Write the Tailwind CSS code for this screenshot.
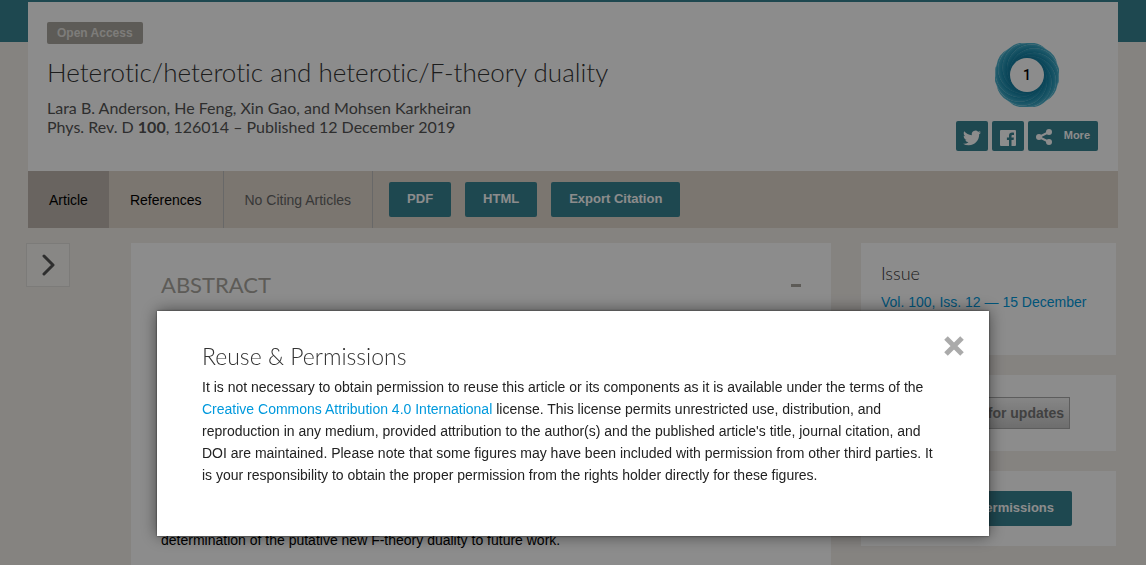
<!DOCTYPE html>
<html lang="en">
<head>
    <meta charset="UTF-8">
    <meta name="viewport" content="width=device-width, initial-scale=1.0">
    <title>Heterotic/heterotic and heterotic/F-theory duality</title>
    <script src="https://cdn.jsdelivr.net/npm/@tailwindcss/browser@4"></script>
</head>
<body class="bg-[#f2eeea] font-['Liberation_Sans',Arial,sans-serif] text-sm text-black overflow-hidden [font-variant-ligatures:none]">
    <div class="h-[42px] bg-[#388393]"></div>

    <div class="relative mx-7 -mt-10">
        <header class="bg-white flex justify-between h-[169px] pl-[19px] pr-5">
            <div class="pt-5">
                <span class="inline-block bg-[#a9a69e] text-[#e4e2de] font-bold text-xs leading-[22px] px-[10px] rounded-xs">Open Access</span>
                <h1 class="font-['Lato',sans-serif] font-light text-[26px] leading-8 mt-3 text-[#333]">Heterotic/heterotic and heterotic/F-theory duality</h1>
                <p class="font-['Lato',sans-serif] text-base leading-[19px] mt-[10px] text-[#555]">Lara B. Anderson, He Feng, Xin Gao, and Mohsen Karkheiran<br>Phys. Rev. D <b class="font-bold">100</b>, 126014 – Published 12 December 2019</p>
            </div>
            <div class="flex flex-col items-center pt-[41px]">
                <svg class="size-16" viewBox="-32 -32 64 64" role="img" aria-label="Altmetric score 1">
                    <defs>
                        <radialGradient id="shade" gradientUnits="userSpaceOnUse" cx="0" cy="-7.5" r="24.5">
                            <stop offset="0.6" stop-color="#007aa0"/>
                            <stop offset="1" stop-color="#4fb2cd"/>
                        </radialGradient>
                        <radialGradient id="depth" gradientUnits="userSpaceOnUse" cx="0" cy="0" r="32">
                            <stop offset="0.5" stop-color="#006a90" stop-opacity="0.85"/>
                            <stop offset="1" stop-color="#0a86aa" stop-opacity="0.1"/>
                        </radialGradient>
                    </defs>
                    <g id="blades"></g>
                    <circle r="31" fill="url(#depth)"/>
                    <circle r="17" fill="#fff"/>
                    <text y="5" text-anchor="middle" class="font-['Roboto',sans-serif] text-sm font-medium">1</text>
                </svg>
                <div class="flex gap-1 mt-[14px]">
                    <button aria-label="Share on Twitter" class="bg-[#388393] w-8 h-[30px] rounded-xs flex items-center justify-center">
                        <svg class="w-[18px] h-[18px] mt-1" viewBox="0 0 24 24" fill="#fff"><path d="M23.953 4.57a10 10 0 01-2.825.775 4.958 4.958 0 002.163-2.723c-.951.555-2.005.959-3.127 1.184a4.92 4.92 0 00-8.384 4.482C7.69 8.095 4.067 6.13 1.64 3.162a4.822 4.822 0 00-.666 2.475c0 1.71.87 3.213 2.188 4.096a4.904 4.904 0 01-2.228-.616v.06a4.923 4.923 0 003.946 4.827 4.996 4.996 0 01-2.212.085 4.936 4.936 0 004.604 3.417 9.867 9.867 0 01-6.102 2.105c-.39 0-.779-.023-1.17-.067a13.995 13.995 0 007.557 2.209c9.053 0 13.998-7.496 13.998-13.985 0-.21 0-.42-.015-.63A9.935 9.935 0 0024 4.59z"/></svg>
                    </button>
                    <button aria-label="Share on Facebook" class="bg-[#388393] w-8 h-[30px] rounded-xs flex items-center justify-center">
                        <svg class="size-4 mt-1" viewBox="0 0 16 16" fill="#fff"><path d="M1 0h14a1 1 0 0 1 1 1v14a1 1 0 0 1-1 1h-3.500V10h2.100l.3-2.400h-2.400V6.100c0-.7.200-1.100 1.200-1.100h1.300V2.700c-.3 0-1-.1-1.900-.1-1.900 0-3.100 1.100-3.100 3.200v1.800H6.900V10H9v6H1a1 1 0 0 1-1-1V1a1 1 0 0 1 1-1z"/></svg>
                    </button>
                    <button class="bg-[#388393] h-[30px] rounded-xs flex items-center gap-3 px-2 text-white font-bold text-[11px]">
                        <svg class="size-4 mt-0.5" viewBox="0 0 16 16" fill="#fff"><path d="M13 3 3 8l10 5" fill="none" stroke="#fff" stroke-width="2"/><circle cx="13" cy="3" r="3"/><circle cx="3" cy="8" r="3"/><circle cx="13" cy="13" r="3"/></svg>
                        More
                    </button>
                </div>
            </div>
        </header>

        <nav class="bg-[#e0d7cc] flex items-center h-[57px]">
            <a href="#" class="bg-[#bfb6b0] h-full flex items-center px-[21px]">Article</a>
            <a href="#" class="h-full flex items-center px-[21px] border-r border-[#bdbdbd]">References</a>
            <span class="h-full flex items-center px-[21px] border-r border-[#bdbdbd] text-[#666]">No Citing Articles</span>
            <div class="flex gap-[14px] ml-4 text-white font-bold text-[13px]">
                <button class="bg-[#388393] h-[35px] px-[18px] rounded-xs">PDF</button>
                <button class="bg-[#388393] h-[35px] px-[18px] rounded-xs">HTML</button>
                <button class="bg-[#388393] h-[35px] px-[18px] rounded-xs">Export Citation</button>
            </div>
        </nav>
    </div>

    <div class="flex items-start pl-[26px] pr-[30px] mt-[15px]">
        <button aria-label="Open article outline" class="size-[44px] bg-[#f7f6f3] border border-[#e2e0dc] flex items-center justify-center shrink-0">
            <svg class="w-[13px] h-6" viewBox="0 0 13 24" fill="none" stroke="#555" stroke-width="3" stroke-linecap="round" stroke-linejoin="round"><path d="M2 3l9 9-9 9"/></svg>
        </button>
        <main class="flex-1 ml-[61px] bg-white px-[30px] pt-7 pb-10 flex flex-col">
            <div class="flex justify-between items-center">
                <h2 class="font-['Lato',sans-serif] text-[22px] leading-7 text-[#a9a69e]">ABSTRACT</h2>
                <button aria-label="Collapse abstract" class="w-[10px] h-[3px] bg-[#a9a69e]"></button>
            </div>
            <p class="mt-[230px] leading-[22px]">determination of the putative new F-theory duality to future work.</p>
        </main>
        <aside class="w-[255px] ml-[30px] flex flex-col gap-5">
            <section class="bg-white h-28 px-5 pt-4">
                <h3 class="font-['Lato',sans-serif] text-lg leading-7 font-light text-[#333]">Issue</h3>
                <a href="#" class="block mt-1 leading-[22px] text-[#0099dd]">Vol. 100, Iss. 12 — 15 December</a>
            </section>
            <section class="bg-white h-[76px] px-5 pt-[22px]">
                <button class="w-[189px] h-8 pr-[5px] text-right font-bold text-[#777] border border-[#aaa] bg-linear-to-b from-[#f4f4f4] to-[#c8c8c8]">Check for updates</button>
            </section>
            <section class="bg-white h-[75px] px-5 pt-5">
                <button class="w-[191px] h-[35px] pr-[18px] text-right rounded-xs bg-[#388393] text-white font-bold text-[13px]">Reuse &amp; Permissions</button>
            </section>
        </aside>
    </div>

    <div class="fixed inset-0 bg-black/45 flex items-end justify-center pb-[29px]">
        <div role="dialog" aria-labelledby="dialog-title" class="relative w-full max-w-[832px] h-[225px] bg-white px-[45px] pt-[29px] shadow-[0_0_15px_rgba(0,0,0,0.5),0_0_2px_rgba(0,0,0,0.6)]">
            <button aria-label="Close" class="absolute top-[25px] right-[25px]">
                <svg class="size-5" viewBox="0 0 20 20" stroke="#aaa" stroke-width="5"><path d="M2 2l16 16M18 2L2 18"/></svg>
            </button>
            <h2 id="dialog-title" class="font-['Lato',sans-serif] font-light text-[23px] leading-8 text-[#333]">Reuse &amp; Permissions</h2>
            <p class="mt-1 leading-[22px] text-[#222]">It is not necessary to obtain permission to reuse this article or its components as it is available under the terms of the <a href="#" class="text-[#0099dd]">Creative Commons Attribution 4.0 International</a> license. This license permits unrestricted use, distribution, and reproduction in any medium, provided attribution to the author(s) and the published article's title, journal citation, and DOI are maintained. Please note that some figures may have been included with permission from other third parties. It is your responsibility to obtain the proper permission from the rights holder directly for these figures.</p>
        </div>
    </div>

    <script>
        // ten identical blades swirl around the score
        document.getElementById('blades').innerHTML = Array.from({ length: 10 }, (_, i) =>
            `<path d="M0 17A24.5 24.5 0 0 1 0 -32A22 22 0 0 1 18.8 -25.9A24.5 24.5 0 0 0 -10 13.75Z" fill="url(#shade)" transform="rotate(${i * 36})"/>`
        ).join('');
    </script>
</body>
</html>
